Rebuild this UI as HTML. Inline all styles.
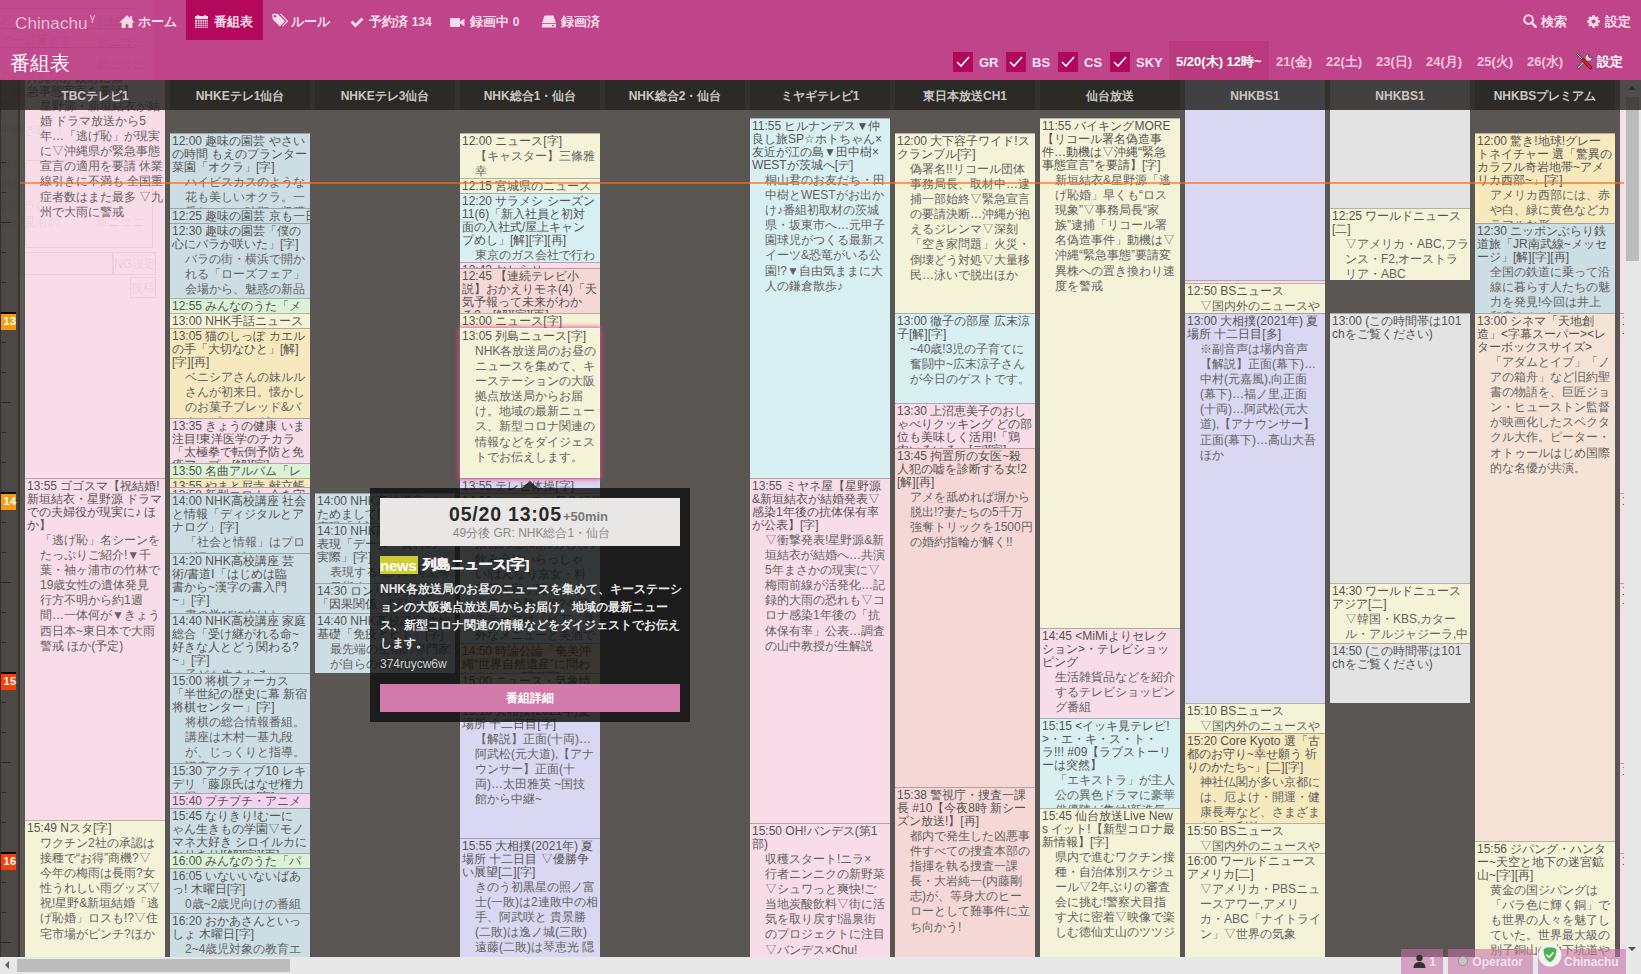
<!DOCTYPE html>
<html><head><meta charset="utf-8">
<style>
*{box-sizing:border-box}
html,body{margin:0;padding:0;width:1641px;height:974px;overflow:hidden;background:#575553;font-family:"Liberation Sans",sans-serif}
#hdr{position:absolute;left:0;top:0;width:1641px;height:80px;background:#bf4489;color:#f6dcea}
#hdr .brand{position:absolute;left:15px;top:12px;font-size:17px;color:#e5bcd5;letter-spacing:0.1px}
#hdr .brand sup{font-size:11px;position:relative;top:-1px;margin-left:2px}
.nav{position:absolute;top:0;height:40px;line-height:43px;font-size:13px;color:#f6dcea;white-space:nowrap;font-weight:bold}
.nav svg{vertical-align:-2px;margin-right:4px}
.nav b{font-size:12px}
.nav.act{background:#b3085c}
#title{position:absolute;left:10px;top:50px;font-size:19.5px;color:#fff}
.chk{position:absolute;top:52px;width:20px;height:20px;background:#b0085a}
.chk svg{position:absolute;left:3px;top:4px}
.chl{position:absolute;top:52px;line-height:21px;font-size:13px;color:#f8e4ef;font-weight:bold}
.dt{position:absolute;top:41px;height:39px;line-height:42px;font-size:13px;color:#f0c7dc;white-space:nowrap;font-weight:bold}
.dt.act{background:#b93a7e;color:#fff;padding:0 7px}

#main{position:absolute;left:0;top:80px;width:1624px;height:877px;overflow:hidden;background:#5a5653}
#tbar{position:absolute;left:0;top:0;width:18px;height:877px;background:#4b4845;border-left:1px solid #34302d}
#tline{position:absolute;left:18px;top:0;width:2px;height:877px;background:#3b3633}
#tstrip{position:absolute;left:20px;top:0;width:5px;height:877px;background:#5b5753}
.tk{position:absolute;left:1px;height:1px;background:#2f2b29}
.hm{position:absolute;left:1px;width:15px;height:16px;color:#fff;font-size:11px;font-weight:bold;line-height:15px;padding-left:2.5px;white-space:nowrap;letter-spacing:0.3px}
.hm i{position:absolute;left:0;top:-2px;width:15px;height:2px;background:#000}
.p{position:absolute;width:140px;border-top:1px solid rgba(0,0,0,0.26);overflow:hidden;color:#555;font-size:12px;white-space:nowrap}
.p .t{line-height:13px;padding-left:2px;padding-top:1px}
.p .d{line-height:15.1px;padding-left:15px;margin-top:1px;color:#646464}
.p.hl{border:1px solid #fffef6;box-shadow:0 0 5px 1px rgba(232,70,130,0.95);z-index:5}.p.hl .t{padding-left:1px}.p.hl .d{padding-left:14px}
#now{position:absolute;left:20px;top:102px;width:1604px;height:2px;background:rgba(255,110,20,0.66)}

#colhdr{position:absolute;left:0;top:80px;width:1624px;height:30px;background:rgba(42,39,37,0.81)}
.ch{position:absolute;top:0;width:140px;height:30px;line-height:32px;text-align:center;color:#c8c6c2;font-size:12px;font-weight:bold;background:rgba(0,0,0,0.12)}

#vsb{position:absolute;left:1624px;top:80px;width:17px;height:877px;background:#e8e8e8}
#vsb .th{position:absolute;left:2px;top:17px;width:13px;height:164px;background:#bcbcbc}
#vsb .up{position:absolute;left:4px;top:6px;width:0;height:0;border-left:4px solid transparent;border-right:4px solid transparent;border-bottom:4px solid #505050}
#vsb .dn{position:absolute;left:4px;bottom:6px;width:0;height:0;border-left:4px solid transparent;border-right:4px solid transparent;border-top:4px solid #505050}
#vhdr{position:absolute;left:1624px;top:80px;width:17px;height:30px;background:rgba(42,39,37,0.81)}
#hsb{position:absolute;left:0;top:957px;width:1624px;height:17px;background:#e8e8e8}
#hsb .th{position:absolute;left:17px;top:2px;width:273px;height:13px;background:#bcbcbc}
#hsb .lf{position:absolute;left:5px;top:4px;width:0;height:0;border-top:4px solid transparent;border-bottom:4px solid transparent;border-right:4px solid #606060}
#corner{position:absolute;left:1624px;top:957px;width:17px;height:17px;background:#e8e8e8}

#tip{position:absolute;left:370px;top:488px;width:320px;height:234px;background:rgba(17,17,17,0.83)}
#tip .arr{position:absolute;left:152px;top:-7px;width:0;height:0;border-left:8px solid transparent;border-right:8px solid transparent;border-bottom:7px solid rgba(17,17,17,0.83)}
#tip .box{position:absolute;left:10px;top:10px;width:300px;height:48px;background:#e8e7e5;text-align:center}
#tip .tm{position:absolute;left:69px;top:5px;font-size:19.5px;font-weight:bold;color:#2a2a2a;white-space:nowrap;letter-spacing:0.8px}
#tip .tm small{font-size:13px;color:#777;letter-spacing:0;margin-left:1px}
#tip .sub{position:absolute;left:0;top:27px;width:300px;font-size:12px;color:#8a8a8a;text-align:center;white-space:nowrap;padding-left:3px}
#tip .cat{position:absolute;left:10px;top:68px;width:38px;height:18px;background:#cfcc30;color:#fff;font-weight:bold;font-size:15px;line-height:19px;text-align:left;overflow:hidden;white-space:nowrap;letter-spacing:-0.2px}
#tip .ttl{position:absolute;left:52px;top:67px;font-size:13.5px;font-weight:bold;color:#f4f4f4;line-height:20px;white-space:nowrap;text-shadow:0.5px 0 0 #f4f4f4}
#tip .desc{position:absolute;left:10px;top:92px;width:300px;font-size:12px;font-weight:bold;color:#e6e6e6;line-height:18px;white-space:nowrap}
#tip .id{position:absolute;left:10px;top:168px;font-size:12px;color:#d0d0d0;line-height:16px}
#tip .btn{position:absolute;left:10px;top:196px;width:300px;height:28px;background:#d27aa9;color:#fff;font-weight:bold;font-size:12px;line-height:28px;text-align:center}

.st{position:absolute;top:949px;height:25px;background:rgba(200,110,165,0.58);color:#f2e2ec;font-weight:bold;font-size:12px;line-height:26px;white-space:nowrap;overflow:hidden}
</style></head><body>

<div id="main">
  <div id="tbar"></div><div id="tline"></div><div id="tstrip"></div>
  <div class="tk" style="top:22px;width:5px"></div>
<div class="tk" style="top:82px;width:5px"></div>
<div class="tk" style="top:112px;width:5px"></div>
<div class="tk" style="top:142px;width:10px"></div>
<div class="tk" style="top:172px;width:5px"></div>
<div class="tk" style="top:202px;width:5px"></div>
<div class="hm" style="top:234px;background:#f89b0c"><i></i>13</div>
<div class="tk" style="top:262px;width:5px"></div>
<div class="tk" style="top:292px;width:5px"></div>
<div class="tk" style="top:322px;width:10px"></div>
<div class="tk" style="top:352px;width:5px"></div>
<div class="tk" style="top:382px;width:5px"></div>
<div class="hm" style="top:414px;background:#f89b0c"><i></i>14</div>
<div class="tk" style="top:442px;width:5px"></div>
<div class="tk" style="top:472px;width:5px"></div>
<div class="tk" style="top:502px;width:10px"></div>
<div class="tk" style="top:532px;width:5px"></div>
<div class="tk" style="top:562px;width:5px"></div>
<div class="hm" style="top:594px;background:#fc3d04"><i></i>15</div>
<div class="tk" style="top:622px;width:5px"></div>
<div class="tk" style="top:652px;width:5px"></div>
<div class="tk" style="top:682px;width:10px"></div>
<div class="tk" style="top:712px;width:5px"></div>
<div class="tk" style="top:742px;width:5px"></div>
<div class="hm" style="top:774px;background:#fc3d04"><i></i>16</div>
<div class="tk" style="top:802px;width:5px"></div>
<div class="tk" style="top:832px;width:5px"></div>
<div class="tk" style="top:862px;width:10px"></div>
  <div class="p" style="left:25px;top:-10px;height:408px;background:#f8dce8"><div class="t"><div>沖縄県が政府に緊</div><div>急事態宣言を要請】</div></div><div class="d"><div>星野源・新垣結衣が結</div><div>婚 ドラマ放送から5</div><div>年…「逃げ恥」が現実</div><div>に▽沖縄県が緊急事態</div><div>宣言の適用を要請 休業</div><div>線引きに不満も 全国重</div><div>症者数はまた最多 ▽九</div><div>州で大雨に警戒</div></div></div>
<div class="p" style="left:25px;top:398px;height:342px;background:#f8dce8"><div class="t"><div>13:55 ゴゴスマ【祝結婚!</div><div>新垣結衣・星野源 ドラマ</div><div>での夫婦役が現実に♪ ほ</div><div>か】</div></div><div class="d"><div>「逃げ恥」名シーンを</div><div>たっぷりご紹介!▼千</div><div>葉・袖ヶ浦市の竹林で</div><div>19歳女性の遺体発見</div><div>行方不明から約1週</div><div>間…一体何が▼きょう</div><div>西日本~東日本で大雨</div><div>警戒 ほか(予定)</div></div></div>
<div class="p" style="left:25px;top:740px;height:213px;background:#f5f3d7"><div class="t"><div>15:49 Nスタ[字]</div></div><div class="d"><div>ワクチン2社の承認は</div><div>接種で“お得”商機?▽</div><div>今年の梅雨は長雨?女</div><div>性うれしい雨グッズ▽</div><div>祝!星野&amp;新垣結婚「逃</div><div>げ恥婚」ロスも!?▽住</div><div>宅市場がピンチ?ほか</div></div></div>
<div class="p" style="left:170px;top:53px;height:75px;background:#ccdee3"><div class="t"><div>12:00 趣味の園芸 やさい</div><div>の時間 もえのプランター</div><div>菜園「オクラ」[字]</div></div><div class="d"><div>ハイビスカスのような</div><div>花も美しいオクラ。一</div><div>番おいしい時期の収穫</div></div></div>
<div class="p" style="left:170px;top:128px;height:15px;background:#ccdee3"><div class="t"><div>12:25 趣味の園芸 京も一日</div></div></div>
<div class="p" style="left:170px;top:143px;height:75px;background:#ccdee3"><div class="t"><div>12:30 趣味の園芸「僕の</div><div>心にバラが咲いた」[字]</div></div><div class="d"><div>バラの街・横浜で開か</div><div>れる「ローズフェア」</div><div>会場から、魅惑の新品</div><div>種を紹介</div></div></div>
<div class="p" style="left:170px;top:218px;height:15px;background:#dbf2d6"><div class="t"><div>12:55 みんなのうた「メ</div></div><div class="d"><div>ロディー」</div></div></div>
<div class="p" style="left:170px;top:233px;height:15px;background:#f5f3d7"><div class="t"><div>13:00 NHK手話ニュース</div></div></div>
<div class="p" style="left:170px;top:248px;height:90px;background:#f6e9be"><div class="t"><div>13:05 猫のしっぽ カエル</div><div>の手「大切なひと」[解]</div><div>[字][再]</div></div><div class="d"><div>ベニシアさんの妹ルル</div><div>さんが初来日。懐かし</div><div>のお菓子ブレッド&amp;バ</div><div>タープディング</div></div></div>
<div class="p" style="left:170px;top:338px;height:45px;background:#f8dce8"><div class="t"><div>13:35 きょうの健康 いま</div><div>注目!東洋医学のチカラ</div><div>「太極拳で転倒予防と免</div><div>疫アップ」[解][字]</div></div></div>
<div class="p" style="left:170px;top:383px;height:15px;background:#dbf2d6"><div class="t"><div>13:50 名曲アルバム「レ</div></div></div>
<div class="p" style="left:170px;top:398px;height:9px;background:#f6e9be"><div class="t"><div>13:55 やまと尼寺 献立帳</div></div></div>
<div class="p" style="left:170px;top:407px;height:6px;background:#f8dce8"><div class="t"><div>13:58 新型コロナ 今を守</div></div></div>
<div class="p" style="left:170px;top:413px;height:60px;background:#ccdee3"><div class="t"><div>14:00 NHK高校講座 社会</div><div>と情報「ディジタルとア</div><div>ナログ」[字]</div></div><div class="d"><div>「社会と情報」はプロ</div><div>グラミングの</div></div></div>
<div class="p" style="left:170px;top:473px;height:60px;background:#ccdee3"><div class="t"><div>14:20 NHK高校講座 芸</div><div>術/書道Ⅰ「はじめは臨</div><div>書から~漢字の書入門</div><div>~」[字]</div></div><div class="d"><div>書の学びに向けた</div></div></div>
<div class="p" style="left:170px;top:533px;height:60px;background:#ccdee3"><div class="t"><div>14:40 NHK高校講座 家庭</div><div>総合「受け継がれる命~</div><div>好きな人とどう関わる?</div><div>~」[字]</div></div><div class="d"><div>子ども生まれる</div></div></div>
<div class="p" style="left:170px;top:593px;height:90px;background:#ccdee3"><div class="t"><div>15:00 将棋フォーカス</div><div>「半世紀の歴史に幕 新宿</div><div>将棋センター」[字]</div></div><div class="d"><div>将棋の総合情報番組。</div><div>講座は木村一基九段</div><div>が、じっくりと指導。</div><div>講座の</div></div></div>
<div class="p" style="left:170px;top:683px;height:30px;background:#ccdee3"><div class="t"><div>15:30 アクティブ10 レキ</div><div>デリ「藤原氏はなぜ権力</div><div>を握ったのか」[字]</div></div></div>
<div class="p" style="left:170px;top:713px;height:15px;background:#f3d3ef"><div class="t"><div>15:40 プチプチ・アニメ</div><div>「ぽんぽこ」</div></div></div>
<div class="p" style="left:170px;top:728px;height:45px;background:#ccdee3"><div class="t"><div>15:45 なりきり!むーに</div><div>ゃん生きもの学園▽モノ</div><div>マネ大好き シロイルカに</div><div>なりきり![解][字][再]</div></div></div>
<div class="p" style="left:170px;top:773px;height:15px;background:#dbf2d6"><div class="t"><div>16:00 みんなのうた「パ</div><div>プリカ」</div></div></div>
<div class="p" style="left:170px;top:788px;height:45px;background:#ccdee3"><div class="t"><div>16:05 いないいないばあ</div><div>っ! 木曜日[字]</div></div><div class="d"><div>0歳~2歳児向けの番組</div></div></div>
<div class="p" style="left:170px;top:833px;height:120px;background:#ccdee3"><div class="t"><div>16:20 おかあさんといっ</div><div>しょ 木曜日[字]</div></div><div class="d"><div>2~4歳児対象の教育エ</div><div>ンターテインメント</div></div></div>
<div class="p" style="left:315px;top:413px;height:30px;background:#ccdee3"><div class="t"><div>14:00 NHK高校講座 ベーシ</div><div>ためまして国語</div><div>表現「小説」</div></div></div>
<div class="p" style="left:315px;top:443px;height:60px;background:#ccdee3"><div class="t"><div>14:10 NHK高校講座 国語</div><div>表現「データ・資料の</div><div>実際」[字]</div></div><div class="d"><div>表現する能力の向上を</div><div>目指す</div></div></div>
<div class="p" style="left:315px;top:503px;height:30px;background:#ccdee3"><div class="t"><div>14:30 ロンリのちから</div><div>「因果関係」[字]</div></div></div>
<div class="p" style="left:315px;top:533px;height:60px;background:#ccdee3"><div class="t"><div>14:40 NHK高校講座 生物</div><div>基礎「免疫とヒト」[字]</div></div><div class="d"><div>最先端の生物の専門家</div><div>が自らの研究を紹介</div></div></div>
<div class="p" style="left:460px;top:53px;height:45px;background:#f5f3d7"><div class="t"><div>12:00 ニュース[字]</div></div><div class="d"><div>【キャスター】三條雅</div><div>幸</div></div></div>
<div class="p" style="left:460px;top:98px;height:15px;background:#f5f3d7"><div class="t"><div>12:15 宮城県のニュース</div></div></div>
<div class="p" style="left:460px;top:113px;height:69px;background:#d8f0f2"><div class="t"><div>12:20 サラメシ シーズン</div><div>11(6)「新入社員と初対</div><div>面の入社式/屋上キャン</div><div>プめし」[解][字][再]</div></div><div class="d"><div>東京のガス会社で行わ</div><div>れた</div></div></div>
<div class="p" style="left:460px;top:182px;height:6px;background:#f8dce8"><div class="t"><div>12:43 おしらせ</div></div></div>
<div class="p" style="left:460px;top:188px;height:45px;background:#f5d8d6"><div class="t"><div>12:45 【連続テレビ小</div><div>説】おかえりモネ(4)「天</div><div>気予報って未来がわか</div><div>る?」[解][字][再]</div></div></div>
<div class="p" style="left:460px;top:233px;height:15px;background:#f5f3d7"><div class="t"><div>13:00 ニュース[字]</div></div></div>
<div class="p hl" style="left:460px;top:248px;height:150px;background:#f5f3d7"><div class="t"><div>13:05 列島ニュース[字]</div></div><div class="d"><div>NHK各放送局のお昼の</div><div>ニュースを集めて、キ</div><div>ーステーションの大阪</div><div>拠点放送局からお届</div><div>け。地域の最新ニュー</div><div>ス、新型コロナ関連の</div><div>情報などをダイジェス</div><div>トでお伝えします。</div></div></div>
<div class="p" style="left:460px;top:398px;height:15px;background:#d9d7f1"><div class="t"><div>13:55 テレビ体操[字]</div></div></div>
<div class="p" style="left:460px;top:413px;height:15px;background:#f5f3d7"><div class="t"><div>14:00 ニュース・気象情報</div></div></div>
<div class="p" style="left:460px;top:428px;height:135px;background:#d8f0f2"><div class="t"><div>14:05 ごごナマ 京都の</div><div>おばんざい</div></div><div class="d"><div>京都の穏和家の大人の</div><div>飲み会にいらっしゃ</div><div>い!はんなり京女・料</div><div>理研究家が腕をふるう</div><div>今夜の晩酌は何?今回</div><div>のテーマは「ピア」意</div><div>外なメニューと美酒で</div></div></div>
<div class="p" style="left:460px;top:563px;height:30px;background:#f6e9be"><div class="t"><div>14:50 時論公論「奄美沖</div><div>縄“世界自然遺産”に問わ</div><div>れるもの」[字][再]</div></div></div>
<div class="p" style="left:460px;top:593px;height:30px;background:#f5f3d7"><div class="t"><div>15:00 ニュース・気象情</div><div>報[字]</div></div></div>
<div class="p" style="left:460px;top:623px;height:135px;background:#d9d7f1"><div class="t"><div>15:10 大相撲(2021年)夏</div><div>場所 十二日目[字]</div></div><div class="d"><div>【解説】正面(十両)…</div><div>阿武松(元大道),【アナ</div><div>ウンサー】正面(十</div><div>両)…太田雅英 ~国技</div><div>館から中継~</div></div></div>
<div class="p" style="left:460px;top:758px;height:195px;background:#d9d7f1"><div class="t"><div>15:55 大相撲(2021年) 夏</div><div>場所 十二日目 ▽優勝争</div><div>い展望[二][字]</div></div><div class="d"><div>きのう初黒星の照ノ富</div><div>士(一敗)は2連敗中の相</div><div>手、阿武咲と 貴景勝</div><div>(二敗)は逸ノ城(三敗)</div><div>遠藤(二敗)は琴恵光 隠</div></div></div>
<div class="p" style="left:750px;top:38px;height:360px;background:#d8f0f2"><div class="t"><div>11:55 ヒルナンデス▼仲</div><div>良し旅SP☆ホトちゃん×</div><div>友近が江の島▼田中樹×</div><div>WESTが茨城へ[デ]</div></div><div class="d"><div>桐山君のお友だち・田</div><div>中樹とWESTがお出か</div><div>け♪番組初取材の茨城</div><div>県・坂東市へ…元甲子</div><div>園球児がつくる最新ス</div><div>イーツ&amp;恐竜がいる公</div><div>園!?▼自由気ままに大</div><div>人の鎌倉散歩♪</div></div></div>
<div class="p" style="left:750px;top:398px;height:345px;background:#f8dce8"><div class="t"><div>13:55 ミヤネ屋【星野源</div><div>&amp;新垣結衣が結婚発表▽</div><div>感染1年後の抗体保有率</div><div>が公表】[字]</div></div><div class="d"><div>▽衝撃発表!星野源&amp;新</div><div>垣結衣が結婚へ…共演</div><div>5年まさかの現実に▽</div><div>梅雨前線が活発化…記</div><div>録的大雨の恐れも▽コ</div><div>ロナ感染1年後の「抗</div><div>体保有率」公表…調査</div><div>の山中教授が生解説</div></div></div>
<div class="p" style="left:750px;top:743px;height:210px;background:#f8dce8"><div class="t"><div>15:50 OH!バンデス(第1</div><div>部)</div></div><div class="d"><div>収穫スタート!ニラ×</div><div>行者ニンニクの新野菜</div><div>▽シュワっと爽快!ご</div><div>当地炭酸飲料▽街に活</div><div>気を取り戻す!温泉街</div><div>のプロジェクトに注目</div><div>▽バンデス×Chu!</div></div></div>
<div class="p" style="left:895px;top:53px;height:180px;background:#f5f3d7"><div class="t"><div>12:00 大下容子ワイド!ス</div><div>クランブル[字]</div></div><div class="d"><div>偽署名!!リコール団体</div><div>事務局長、取材中…逮</div><div>捕一部始終▽緊急宣言</div><div>の要請決断…沖縄が抱</div><div>えるジレンマ▽深刻</div><div>「空き家問題」火災・</div><div>倒壊どう対処▽大量移</div><div>民…泳いで脱出ほか</div></div></div>
<div class="p" style="left:895px;top:233px;height:90px;background:#d8f0f2"><div class="t"><div>13:00 徹子の部屋 広末涼</div><div>子[解][字]</div></div><div class="d"><div>~40歳!3児の子育てに</div><div>奮闘中~広末涼子さん</div><div>が今日のゲストです。</div></div></div>
<div class="p" style="left:895px;top:323px;height:45px;background:#f8dce8"><div class="t"><div>13:30 上沼恵美子のおし</div><div>ゃべりクッキング どの部</div><div>位も美味しく活用!「鶏</div><div>肉いろいろ」[デ][字]</div></div></div>
<div class="p" style="left:895px;top:368px;height:339px;background:#f5d8d6"><div class="t"><div>13:45 拘置所の女医~殺</div><div>人犯の嘘を診断する女!2</div><div>[解][再]</div></div><div class="d"><div>アメを舐めれば塀から</div><div>脱出!?妻たちの5千万</div><div>強奪トリックを1500円</div><div>の婚約指輪が解く!!</div></div></div>
<div class="p" style="left:895px;top:707px;height:246px;background:#f5d8d6"><div class="t"><div>15:38 警視庁・捜査一課</div><div>長 #10【今夜8時 新シー</div><div>ズン放送!】[再]</div></div><div class="d"><div>都内で発生した凶悪事</div><div>件すべての捜査本部の</div><div>指揮を執る捜査一課</div><div>長・大岩純一(内藤剛</div><div>志)が、等身大のヒー</div><div>ローとして難事件に立</div><div>ち向かう!</div></div></div>
<div class="p" style="left:1040px;top:38px;height:510px;background:#f5f3d7"><div class="t"><div>11:55 バイキングMORE</div><div>【リコール署名偽造事</div><div>件…動機は▽沖縄“緊急</div><div>事態宣言”を要請】[字]</div></div><div class="d"><div>新垣結衣&amp;星野源「逃</div><div>げ恥婚」早くも“ロス</div><div>現象”▽事務局長“家</div><div>族”逮捕「リコール署</div><div>名偽造事件」動機は▽</div><div>沖縄“緊急事態”要請変</div><div>異株への置き換わり速</div><div>度を警戒</div></div></div>
<div class="p" style="left:1040px;top:548px;height:90px;background:#f8dce8"><div class="t"><div>14:45 &lt;MiMiよりセレク</div><div>ション&gt;・テレビショッ</div><div>ピング</div></div><div class="d"><div>生活雑貨品などを紹介</div><div>するテレビショッピン</div><div>グ番組</div></div></div>
<div class="p" style="left:1040px;top:638px;height:90px;background:#d8f0f2"><div class="t"><div>15:15 &lt;イッキ見テレビ!</div><div>&gt;・エ・キ・ス・ト・</div><div>ラ!!! #09【ラブストーリ</div><div>ーは突然】</div></div><div class="d"><div>「エキストラ」が主人</div><div>公の異色ドラマに豪華</div><div>俳優陣が集結!新進気</div></div></div>
<div class="p" style="left:1040px;top:728px;height:225px;background:#f5f3d7"><div class="t"><div>15:45 仙台放送Live New</div><div>s イット!【新型コロナ最</div><div>新情報】[字]</div></div><div class="d"><div>県内で進むワクチン接</div><div>種・自治体別スケジュ</div><div>ール▽2年ぶりの審査</div><div>会に挑む!警察犬目指</div><div>す犬に密着▽映像で楽</div><div>しむ徳仙丈山のツツジ</div></div></div>
<div class="p" style="left:1185px;top:-307px;height:507px;background:#d9d7f1"></div>
<div class="p" style="left:1185px;top:200px;height:3px;background:#f8dce8"></div>
<div class="p" style="left:1185px;top:203px;height:30px;background:#f5f3d7"><div class="t"><div>12:50 BSニュース</div></div><div class="d"><div>▽国内外のニュースや</div></div></div>
<div class="p" style="left:1185px;top:233px;height:390px;background:#d9d7f1"><div class="t"><div>13:00 大相撲(2021年) 夏</div><div>場所 十二日目[多]</div></div><div class="d"><div>※副音声は場内音声</div><div>【解説】正面(幕下)…</div><div>中村(元嘉風),向正面</div><div>(幕下)…福ノ里,正面</div><div>(十両)…阿武松(元大</div><div>道),【アナウンサー】</div><div>正面(幕下)…高山大吾</div><div>ほか</div></div></div>
<div class="p" style="left:1185px;top:623px;height:30px;background:#f5f3d7"><div class="t"><div>15:10 BSニュース</div></div><div class="d"><div>▽国内外のニュースや</div></div></div>
<div class="p" style="left:1185px;top:653px;height:90px;background:#f6e9be"><div class="t"><div>15:20 Core Kyoto 選「古</div><div>都のお守り~幸せ願う 祈</div><div>りのかたち~」[二][字]</div></div><div class="d"><div>神社仏閣が多い京都に</div><div>は、厄よけ・開運・健</div><div>康長寿など、さまざま</div><div>な「ご利益」</div></div></div>
<div class="p" style="left:1185px;top:743px;height:30px;background:#f5f3d7"><div class="t"><div>15:50 BSニュース</div></div><div class="d"><div>▽国内外のニュースや</div></div></div>
<div class="p" style="left:1185px;top:773px;height:180px;background:#f5f3d7"><div class="t"><div>16:00 ワールドニュース</div><div>アメリカ[二]</div></div><div class="d"><div>▽アメリカ・PBSニュ</div><div>ースアワー,アメリ</div><div>カ・ABC「ナイトライ</div><div>ン」▽世界の気象</div></div></div>
<div class="p" style="left:1330px;top:-307px;height:435px;background:#e3e3e3"></div>
<div class="p" style="left:1330px;top:128px;height:72px;background:#f5f3d7"><div class="t"><div>12:25 ワールドニュース</div><div>[二]</div></div><div class="d"><div>▽アメリカ・ABC,フラ</div><div>ンス・F2,オーストラ</div><div>リア・ABC</div></div></div>
<div class="p" style="left:1330px;top:233px;height:270px;background:#e3e3e3"><div class="t"><div>13:00 (この時間帯は101</div><div>chをご覧ください)</div></div></div>
<div class="p" style="left:1330px;top:503px;height:60px;background:#f5f3d7"><div class="t"><div>14:30 ワールドニュース</div><div>アジア[二]</div></div><div class="d"><div>▽韓国・KBS,カター</div><div>ル・アルジャジーラ,中</div></div></div>
<div class="p" style="left:1330px;top:563px;height:60px;background:#e3e3e3"><div class="t"><div>14:50 (この時間帯は101</div><div>chをご覧ください)</div></div></div>
<div class="p" style="left:1475px;top:53px;height:90px;background:#f6e9be"><div class="t"><div>12:00 驚き!地球!グレー</div><div>トネイチャー 選「驚異の</div><div>カラフル奇岩地帯~アメ</div><div>リカ西部~」[字]</div></div><div class="d"><div>アメリカ西部には、赤</div><div>や白、緑に黄色などカ</div><div>ラフルな形</div></div></div>
<div class="p" style="left:1475px;top:143px;height:90px;background:#ccdee3"><div class="t"><div>12:30 ニッポンぶらり鉄</div><div>道旅「JR南武線~メッセ</div><div>ージ」[解][字][再]</div></div><div class="d"><div>全国の鉄道に乗って沿</div><div>線に暮らす人たちの魅</div><div>力を発見!今回は井上</div><div>和彦さんが</div></div></div>
<div class="p" style="left:1475px;top:233px;height:528px;background:#f5e4d6"><div class="t"><div>13:00 シネマ「天地創</div><div>造」&lt;字幕スーパー&gt;&lt;レ</div><div>ターボックスサイズ&gt;</div></div><div class="d"><div>「アダムとイブ」「ノ</div><div>アの箱舟」など旧約聖</div><div>書の物語を、巨匠ジョ</div><div>ン・ヒューストン監督</div><div>が映画化したスペクタ</div><div>クル大作。ピーター・</div><div>オトゥールはじめ国際</div><div>的な名優が共演。</div></div></div>
<div class="p" style="left:1475px;top:761px;height:192px;background:#f5f3d7"><div class="t"><div>15:56 ジパング・ハンタ</div><div>ー~天空と地下の迷宮鉱</div><div>山~[字][再]</div></div><div class="d"><div>黄金の国ジパングは</div><div>「バラ色に輝く銅」で</div><div>も世界の人々を魅了し</div><div>ていた。世界最大級の</div><div>別子銅山の地下坑道や</div></div></div>
<div class="p" style="left:1620px;top:-307px;height:540px;background:#f8dce8"></div>
<div class="p" style="left:1620px;top:233px;height:180px;background:#f8dce8"><div class="t"><div>13:00 ショップ</div><div>チャンネル</div></div><div class="d"><div>商品紹介</div></div></div>
<div class="p" style="left:1620px;top:413px;height:90px;background:#f8dce8"><div class="t"><div>14:00 ショップ</div></div><div class="d"><div>商品</div></div></div>
<div class="p" style="left:1620px;top:503px;height:180px;background:#f8dce8"><div class="t"><div>14:30 ショップ</div><div>チャンネル</div></div><div class="d"><div>商品紹介</div><div>紹介</div></div></div>
<div class="p" style="left:1620px;top:683px;height:90px;background:#f8dce8"><div class="t"><div>15:30 ショップ</div></div><div class="d"><div>商品</div></div></div>
<div class="p" style="left:1620px;top:773px;height:180px;background:#f8dce8"><div class="t"><div>16:00 ショップ</div></div><div class="d"><div>商品紹介</div></div></div>
  <div id="now"></div>
</div>

<div id="colhdr">
<div class="ch" style="left:25px">TBCテレビ1</div>
<div class="ch" style="left:170px">NHKEテレ1仙台</div>
<div class="ch" style="left:315px">NHKEテレ3仙台</div>
<div class="ch" style="left:460px">NHK総合1・仙台</div>
<div class="ch" style="left:605px">NHK総合2・仙台</div>
<div class="ch" style="left:750px">ミヤギテレビ1</div>
<div class="ch" style="left:895px">東日本放送CH1</div>
<div class="ch" style="left:1040px">仙台放送</div>
<div class="ch" style="left:1185px">NHKBS1</div>
<div class="ch" style="left:1330px">NHKBS1</div>
<div class="ch" style="left:1475px">NHKBSプレミアム</div>
</div>

<div id="vsb"><div class="up"></div><div class="th"></div><div class="dn"></div></div>
<div id="vhdr"></div>
<div id="hsb"><div class="lf"></div><div class="th"></div></div>
<div id="corner"></div>

<div id="hdr">
  <div class="brand">Chinachu<sup>γ</sup></div>
  <div class="nav" style="left:119px"><svg width="16" height="13" viewBox="0 0 16 13" style="margin-right:3px"><path d="M8 0.3L0.3 7.4h2.3V13h4V9.3h2.8V13h4V7.4h2.3l-2.6-2.4V1.2h-1.9v2.1z" fill="#f6dcea"/></svg>ホーム</div>
  <div class="nav act" style="left:186px;width:77px;padding-left:9px"><svg width="13" height="13" viewBox="0 0 13 13" style="margin-right:6px"><g fill="#f6dcea"><rect x="2" y="0" width="2" height="2"/><rect x="9" y="0" width="2" height="2"/><rect x="0" y="1" width="13" height="3.2"/><rect x="0" y="5" width="13" height="8"/></g><g fill="#b3085c"><rect x="0" y="6.8" width="13" height="0.7"/><rect x="0" y="8.9" width="13" height="0.7"/><rect x="0" y="11" width="13" height="0.7"/><rect x="2.3" y="5" width="0.7" height="8"/><rect x="4.6" y="5" width="0.7" height="8"/><rect x="6.9" y="5" width="0.7" height="8"/><rect x="9.2" y="5" width="0.7" height="8"/><rect x="11.5" y="5" width="0.7" height="8"/></g></svg>番組表</div>
  <div class="nav" style="left:272px"><svg width="17" height="15" viewBox="0 0 17 15" style="margin-right:2px"><path d="M0.5 1.2V6l7.3 7.5 5.3-5.3L5.5 0.8H1z" fill="#f6dcea"/><circle cx="3" cy="3.3" r="1.2" fill="#bf4489"/><path d="M7.5 0.8h1.6l7.2 7.4-5.3 5.3-0.8-0.8 4.5-4.5z" fill="#f6dcea"/></svg>ルール</div>
  <div class="nav" style="left:350px"><svg width="14" height="12" viewBox="0 0 14 12" style="margin-right:5px"><path d="M0.5 6.5l2-2 3 3 6-6 2 2-8 8z" fill="#f6dcea"/></svg>予約済 <b>134</b></div>
  <div class="nav" style="left:450px"><svg width="15" height="11" viewBox="0 0 15 11" style="margin-right:5px"><rect x="0" y="1" width="10" height="9" rx="1" fill="#f6dcea"/><path d="M10 4.5L14.5 1.5v8L10 6.5z" fill="#f6dcea"/></svg>録画中 <b>0</b></div>
  <div class="nav" style="left:542px"><svg width="14" height="13" viewBox="0 0 14 13" style="margin-right:5px"><path d="M2.5 0.5h9L14 8H0z" fill="#f6dcea"/><path d="M0 8.8h14v3.7H0z" fill="#f6dcea"/><rect x="10" y="10" width="2" height="1.2" fill="#bf4489"/></svg>録画済</div>

  <div class="nav" style="left:1523px"><svg width="14" height="14" viewBox="0 0 14 14" style="margin-right:4px"><circle cx="5.6" cy="5.6" r="4.3" fill="none" stroke="#f6dcea" stroke-width="2"/><path d="M8.6 8.6l4.2 4.2" stroke="#f6dcea" stroke-width="2.6" stroke-linecap="round"/></svg>検索</div>
  <div class="nav" style="left:1587px"><svg width="13" height="13" viewBox="0 0 13 13" style="margin-right:5px"><g fill="#f6dcea"><circle cx="6.5" cy="6.5" r="4.9"/><rect x="5.2" y="0.2" width="2.6" height="12.6"/><rect x="0.2" y="5.2" width="12.6" height="2.6"/><rect x="5.2" y="0.2" width="2.6" height="12.6" transform="rotate(45 6.5 6.5)"/><rect x="0.2" y="5.2" width="12.6" height="2.6" transform="rotate(45 6.5 6.5)"/></g><circle cx="6.5" cy="6.5" r="2.1" fill="#bf4489"/></svg>設定</div>

  <div id="title">番組表</div>

  <div class="chk" style="left:953px"><svg width="14" height="12" viewBox="0 0 14 12"><path d="M1 6l4 4 8-9" fill="none" stroke="#fff" stroke-width="1.6"/></svg></div><div class="chl" style="left:979px">GR</div>
  <div class="chk" style="left:1006px"><svg width="14" height="12" viewBox="0 0 14 12"><path d="M1 6l4 4 8-9" fill="none" stroke="#fff" stroke-width="1.6"/></svg></div><div class="chl" style="left:1032px">BS</div>
  <div class="chk" style="left:1058px"><svg width="14" height="12" viewBox="0 0 14 12"><path d="M1 6l4 4 8-9" fill="none" stroke="#fff" stroke-width="1.6"/></svg></div><div class="chl" style="left:1084px">CS</div>
  <div class="chk" style="left:1110px"><svg width="14" height="12" viewBox="0 0 14 12"><path d="M1 6l4 4 8-9" fill="none" stroke="#fff" stroke-width="1.6"/></svg></div><div class="chl" style="left:1136px">SKY</div>

  <div class="dt act" style="left:1169px;width:100px">5/20(木) 12時~</div>
  <div class="dt" style="left:1276px">21(金)</div>
  <div class="dt" style="left:1326px">22(土)</div>
  <div class="dt" style="left:1376px">23(日)</div>
  <div class="dt" style="left:1426px">24(月)</div>
  <div class="dt" style="left:1477px">25(火)</div>
  <div class="dt" style="left:1527px">26(水)</div>
  <div class="dt" style="left:1576px;color:#fff"><svg width="17" height="17" viewBox="0 0 17 17" style="vertical-align:-4px"><path d="M2 15L10.5 6.5" stroke="#4a3040" stroke-width="2.6" stroke-linecap="round"/><path d="M2 15L10.5 6.5" stroke="#d8d8d8" stroke-width="1.2" stroke-linecap="round"/><path d="M13.2 1.2a3.6 3.6 0 1 0 2.9 2.9l-2 0.9-1.9-1.9z" fill="#cfcfcf" stroke="#4a3040" stroke-width="0.6"/><path d="M1.5 1.5L7.5 7.5" stroke="#4a3040" stroke-width="2.2" stroke-linecap="round"/><path d="M1.5 1.5L7.5 7.5" stroke="#e0e0e0" stroke-width="1" stroke-linecap="round"/><path d="M7 7L14.5 14.5" stroke="#5a1020" stroke-width="3.2" stroke-linecap="round"/><path d="M7 7L14.5 14.5" stroke="#d8202a" stroke-width="2" stroke-linecap="round"/></svg> 設定</div>
</div>

<div id="tip">
  <div class="arr"></div>
  <div class="box"><div class="tm">05/20 13:05<small>+50min</small></div><div class="sub">49分後 GR: NHK総合1・仙台</div></div>
  <div class="cat">news</div>
  <div class="ttl">列島ニュース[字]</div>
  <div class="desc">NHK各放送局のお昼のニュースを集めて、キーステーシ<br>ョンの大阪拠点放送局からお届け。地域の最新ニュー<br>ス、新型コロナ関連の情報などをダイジェストでお伝え<br>します。</div>
  <div class="id">374ruycw6w</div>
  <div class="btn">番組詳細</div>
</div>

<div class="st" style="left:1401px;width:42px;padding-left:12px"><svg width="13" height="14" viewBox="0 0 13 14" style="vertical-align:-2px"><circle cx="6.5" cy="4" r="3.2" fill="#333"/><path d="M0.5 14c0-4 2.5-6 6-6s6 2 6 6z" fill="#333"/></svg> 1</div>
<div class="st" style="left:1448px;width:85px;padding-left:9px"><svg width="12" height="12" viewBox="0 0 12 12" style="vertical-align:-1px"><circle cx="6" cy="6" r="4.6" fill="#c4c4c4" stroke="#8a8a8a" stroke-width="0.8"/></svg> Operator</div>
<div class="st" style="left:1538px;width:88px;padding-left:26px">Chinachu</div>
<svg style="position:absolute;left:1538px;top:943px" width="24" height="24" viewBox="0 0 26 26"><circle cx="13" cy="13" r="12.5" fill="#f4f4f4"/><path d="M13 4.5c-3 0-5.5 1-7 2 0 6 1.5 11 7 14.5 5.5-3.5 7-8.5 7-14.5-1.5-1-4-2-7-2z" fill="#4caf50"/><path d="M9 12.5l3 3 5-5.5" fill="none" stroke="#fff" stroke-width="1.6"/></svg>

<div id="ghost" style="position:absolute;left:0;top:0;width:170px;height:310px;pointer-events:none;font-size:12px;color:rgba(0,0,0,0.075);white-space:nowrap;overflow:hidden">
  <div style="position:absolute;left:0;top:0;width:154px;height:80px;background:rgba(255,255,255,0.035)"></div>
  <div style="position:absolute;left:0;top:8px;width:135px;height:1px;background:rgba(0,0,0,0.06)"></div>
  <div style="position:absolute;left:0;top:28px;width:135px;height:1px;background:rgba(0,0,0,0.05)"></div>
  <div style="position:absolute;left:0;top:47px;width:135px;height:1px;background:rgba(0,0,0,0.06)"></div>
  <div style="position:absolute;left:0;top:12px">どっ</div><div style="position:absolute;left:96px;top:15px">2chDAT</div>
  <div style="position:absolute;left:0;top:32px">ゲーム落とす</div><div style="position:absolute;left:96px;top:34px">新ニコニ</div>
  <div style="position:absolute;left:40px;top:52px">いで</div><div style="position:absolute;left:96px;top:57px">新ニコニ</div>
  <div style="position:absolute;left:0;top:66px">と思ってた</div>
  <div style="position:absolute;left:0;top:84px">wｗ</div>
  <div style="position:absolute;left:0;top:122px">中継ぎ陣!（</div>
  <div style="position:absolute;left:0;top:158px">###</div>
  <div style="position:absolute;left:0;top:176px">のか</div>
  <div style="position:absolute;left:0;top:198px">のツラい</div>
  <div style="position:absolute;left:0;top:214px">けが見もの</div><div style="position:absolute;left:96px;top:214px">新ニコニ</div>
  <div style="position:absolute;left:25px;top:160px;width:128px;height:88px;border:1px solid rgba(0,0,0,0.05)"></div>
  <div style="position:absolute;left:20px;top:252px;width:93px;height:23px;border:1px solid rgba(0,0,0,0.05)"></div>
  <div style="position:absolute;left:113px;top:252px;width:43px;height:23px;border:1px solid rgba(0,0,0,0.05);line-height:22px;text-align:center">NG設定</div>
  <div style="position:absolute;left:130px;top:277px;width:26px;height:21px;border:1px solid rgba(0,0,0,0.05);line-height:20px;text-align:center">投稿</div>
</div>

</body></html>
